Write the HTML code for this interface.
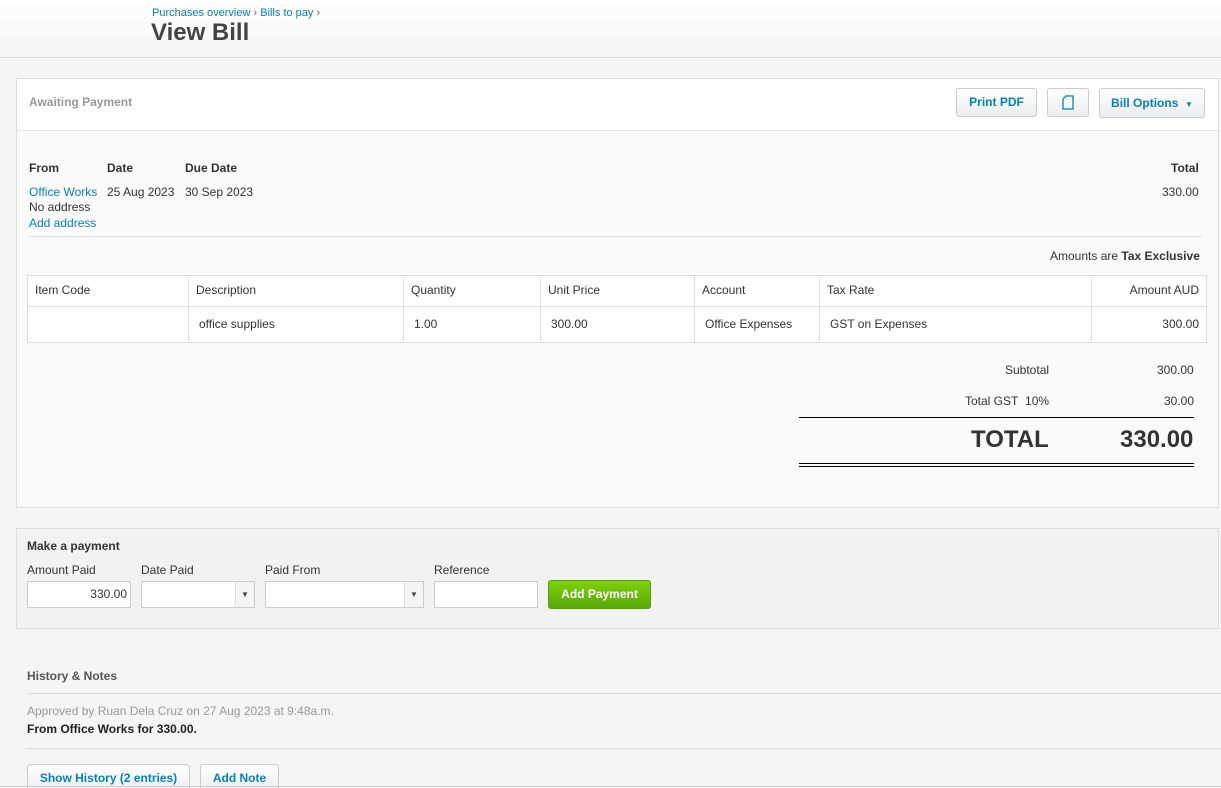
<!DOCTYPE html>
<html><head><style>
*{box-sizing:border-box;margin:0;padding:0}
html,body{width:1221px;height:788px;overflow:hidden}
body{background:#f5f5f5;font-family:"Liberation Sans",Arial,sans-serif;font-size:12px;color:#333;position:relative}
.a{position:absolute;white-space:nowrap}
.link{color:#0a7fb5}
.btn{position:absolute;border:1px solid #ccc;border-radius:3px;background:linear-gradient(#fff,#e9ecee);color:#0a7fb5;font-weight:bold;font-size:12px;text-align:center}
.th{position:absolute;top:0;height:31px;line-height:29px;border-right:1px solid #ddd}
.td{position:absolute;top:31px;height:36px;line-height:34px;border-right:1px solid #ddd}
.inp{position:absolute;top:581px;height:27px;background:#fff;border:1px solid #ccc}
.dd{position:absolute;right:0;top:0;width:19px;height:25px;border-left:1px solid #ddd;background:#f4f4f4;font-size:8px;text-align:center;line-height:25px;color:#444}
</style></head><body>
<div class="a" style="left:0;top:0;width:1221px;height:58px;background:linear-gradient(#fff,#f5f5f5);border-bottom:1px solid #ddd"></div>
<div class="a link" style="left:152px;top:7px;font-size:11px">Purchases overview <span style="color:#666">›</span> Bills to pay <span style="color:#666">›</span></div>
<div class="a" style="left:151px;top:19px;font-size:24px;font-weight:bold;color:#444">View Bill</div>

<div class="a" style="left:16px;top:78px;width:1203px;height:430px;background:#fafafa;border:1px solid #ddd"></div>
<div class="a" style="left:17px;top:79px;width:1201px;height:52px;background:#fff;border-bottom:1px solid #e5e5e5"></div>
<div class="a" style="left:29px;top:95px;font-weight:bold;color:#999">Awaiting Payment</div>
<div class="btn" style="left:956px;top:88px;width:81px;height:29px;line-height:27px">Print PDF</div>
<div class="btn" style="left:1047px;top:88px;width:42px;height:29px;padding-top:6px"><svg width="12" height="15" viewBox="0 0 12 15"><path d="M4 1H11V14H1V4Z" fill="none" stroke="#0a7fb5" stroke-width="1.3"/></svg></div>
<div class="btn" style="left:1099px;top:88px;width:106px;height:30px;line-height:28px">Bill Options &nbsp;<span style="font-size:8px">▼</span></div>

<div class="a" style="left:29px;top:161px;font-weight:bold">From</div>
<div class="a" style="left:107px;top:161px;font-weight:bold">Date</div>
<div class="a" style="left:185px;top:161px;font-weight:bold">Due Date</div>
<div class="a" style="left:1171px;top:161px;font-weight:bold">Total</div>
<div class="a link" style="left:29px;top:185px">Office Works</div>
<div class="a" style="left:107px;top:185px">25 Aug 2023</div>
<div class="a" style="left:185px;top:185px">30 Sep 2023</div>
<div class="a" style="left:1162px;top:185px">330.00</div>
<div class="a" style="left:29px;top:200px">No address</div>
<div class="a link" style="left:29px;top:216px">Add address</div>
<div class="a" style="left:29px;top:236px;width:1173px;border-top:1px solid #ddd"></div>
<div class="a" style="left:1050px;top:249px">Amounts are <b>Tax Exclusive</b></div>

<div class="a" style="left:27px;top:275px;width:1180px;height:68px;background:#fff;border:1px solid #ddd">
<div class="a" style="left:0;top:30px;width:1178px;border-top:1px solid #ddd"></div>
<div class="th" style="left:0;width:161px;padding-left:7px">Item Code</div>
<div class="th" style="left:161px;width:215px;padding-left:7px">Description</div>
<div class="th" style="left:376px;width:137px;padding-left:7px">Quantity</div>
<div class="th" style="left:513px;width:154px;padding-left:7px">Unit Price</div>
<div class="th" style="left:667px;width:125px;padding-left:7px">Account</div>
<div class="th" style="left:792px;width:272px;padding-left:7px">Tax Rate</div>
<div class="th" style="left:1064px;width:114px;padding-right:7px;text-align:right;border:none">Amount AUD</div>
<div class="td" style="left:0;width:161px"></div>
<div class="td" style="left:161px;width:215px;padding-left:10px">office supplies</div>
<div class="td" style="left:376px;width:137px;padding-left:10px">1.00</div>
<div class="td" style="left:513px;width:154px;padding-left:10px">300.00</div>
<div class="td" style="left:667px;width:125px;padding-left:10px">Office Expenses</div>
<div class="td" style="left:792px;width:272px;padding-left:10px">GST on Expenses</div>
<div class="td" style="left:1064px;width:114px;padding-right:7px;text-align:right;border:none">300.00</div>
</div>

<div class="a" style="left:1005px;top:363px">Subtotal</div>
<div class="a" style="left:1157px;top:363px">300.00</div>
<div class="a" style="left:965px;top:394px">Total GST&nbsp; 10%</div>
<div class="a" style="left:1164px;top:394px">30.00</div>
<div class="a" style="left:799px;top:417px;width:395px;border-top:1px solid #000"></div>
<div class="a" style="left:971px;top:426px;font-size:24px;font-weight:bold;color:#333">TOTAL</div>
<div class="a" style="left:1120px;top:426px;font-size:24px;font-weight:bold;color:#333">330.00</div>
<div class="a" style="left:799px;top:463px;width:395px;height:4px;border-top:1px solid #000;border-bottom:1px solid #000"></div>

<div class="a" style="left:16px;top:528px;width:1203px;height:101px;background:#f2f2f2;border:1px solid #ddd"></div>
<div class="a" style="left:27px;top:539px;font-weight:bold">Make a payment</div>
<div class="a" style="left:27px;top:563px">Amount Paid</div>
<div class="a" style="left:141px;top:563px">Date Paid</div>
<div class="a" style="left:265px;top:563px">Paid From</div>
<div class="a" style="left:434px;top:563px">Reference</div>
<div class="inp" style="left:27px;width:104px;text-align:right;padding-right:3px;line-height:25px">330.00</div>
<div class="inp" style="left:141px;width:114px"><div class="dd">▼</div></div>
<div class="inp" style="left:265px;width:159px"><div class="dd">▼</div></div>
<div class="inp" style="left:434px;width:104px"></div>
<div class="a" style="left:548px;top:580px;width:103px;height:29px;border-radius:3px;background:linear-gradient(#7fcf0e,#5aa80a);border:1px solid #56a00a;color:#fff;font-weight:bold;text-align:center;line-height:27px">Add Payment</div>

<div class="a" style="left:27px;top:669px;font-weight:bold;color:#555">History &amp; Notes</div>
<div class="a" style="left:27px;top:693px;width:1194px;border-top:1px solid #ddd"></div>
<div class="a" style="left:27px;top:704px;color:#999">Approved by Ruan Dela Cruz on 27 Aug 2023 at 9:48a.m.</div>
<div class="a" style="left:27px;top:722px;font-weight:bold;color:#222">From Office Works for 330.00.</div>
<div class="a" style="left:27px;top:748px;width:1194px;border-top:1px solid #ddd"></div>
<div class="btn" style="left:27px;top:764px;width:163px;height:30px;line-height:26px">Show History (2 entries)</div>
<div class="btn" style="left:200px;top:764px;width:79px;height:30px;line-height:26px">Add Note</div>
<div class="a" style="left:0;top:786px;width:1221px;border-top:1px solid #ccc"></div>
</body></html>
